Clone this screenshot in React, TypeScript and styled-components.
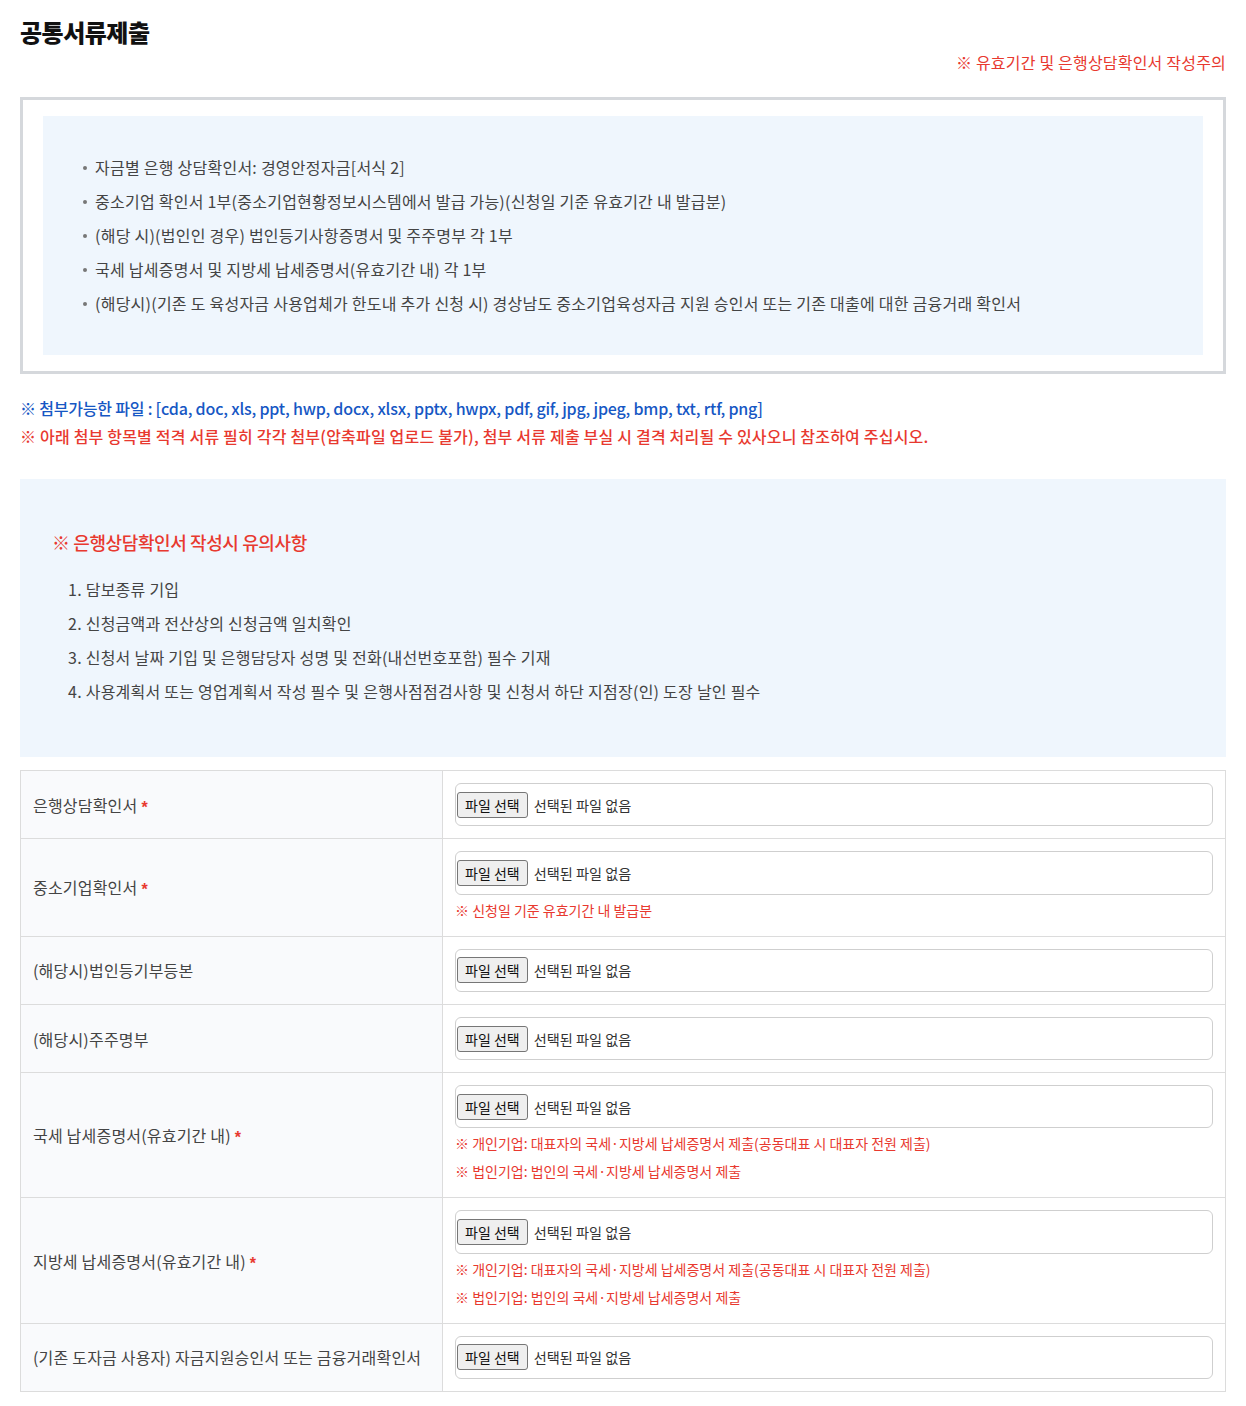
import React from "react";
import styled, { createGlobalStyle } from "styled-components";

const GlobalStyle = createGlobalStyle`
  html, body { margin: 0; padding: 0; background: #fff; }
  body {
    font-family: "Noto Sans CJK KR", "Noto Sans", sans-serif;
    color: #333;
  }
  * { box-sizing: border-box; }
`;

const Page = styled.div`
  padding: 14px 20px 14px 20px;
  width: 1246px;
`;

const Title = styled.h2`
  margin: 0;
  font-size: 24px;
  font-weight: 900;
  color: #111;
  line-height: 36px;
  letter-spacing: -0.5px;
`;

const TopNote = styled.div`
  text-align: right;
  color: #e8392f;
  font-size: 16px;
  line-height: 24px;
  letter-spacing: 0.2px;
`;

const GuideBox = styled.div`
  margin-top: 23px;
  border: 3px solid #d5d8dc;
  padding: 16px 20px;
`;

const GuideInner = styled.ul`
  margin: 0;
  list-style: none;
  background: #eff6fd;
  padding: 34px 40px 35px 40px;
`;

const GuideItem = styled.li`
  position: relative;
  font-size: 16px;
  line-height: 34px;
  color: #444;
  padding-left: 12px;
  letter-spacing: 0.25px;
  &::before {
    content: "";
    position: absolute;
    left: 0;
    top: 16px;
    width: 4px;
    height: 4px;
    border-radius: 50%;
    background: #777;
  }
`;

const Notice = styled.p<{ $tone: "blue" | "red" }>`
  margin: 0;
  font-size: 16px;
  line-height: 28px;
  font-weight: 500;
  letter-spacing: ${(p) => (p.$tone === "blue" ? "-0.2px" : "0.2px")};
  color: ${(p) => (p.$tone === "blue" ? "#1657c4" : "#e8392f")};
`;

const NoticeGroup = styled.div`
  margin-top: 20px;
`;

const CautionBox = styled.div`
  margin-top: 29px;
  background: #eff6fd;
  padding: 48px 32px 49px 32px;
`;

const CautionTitle = styled.h3`
  margin: 0;
  font-size: 18px;
  line-height: 30px;
  font-weight: 500;
  color: #e8392f;
  letter-spacing: -0.4px;
`;

const CautionList = styled.ol`
  margin: 15px 0 0 0;
  padding: 0 0 0 16px;
  list-style: none;
`;

const CautionItem = styled.li`
  font-size: 16px;
  line-height: 34px;
  color: #444;
  letter-spacing: 0.25px;
`;

const Table = styled.table`
  margin-top: 13px;
  width: 100%;
  border-collapse: collapse;
  table-layout: fixed;
  border: 1px solid #dcdcdc;
`;

const Row = styled.tr`
  border-top: 1px solid #dcdcdc;
`;

const LabelCell = styled.th`
  width: 422px;
  background: #f9fafc;
  text-align: left;
  font-weight: 400;
  font-size: 16px;
  color: #444;
  padding: 0 12px;
  border-right: 1px solid #dcdcdc;
  vertical-align: middle;
  letter-spacing: 0.2px;
`;

const Required = styled.span`
  color: #e8392f;
  margin-left: 4px;
  font-family: "Liberation Sans", Arial, sans-serif;
  font-weight: 700;
  font-size: 16px;
  vertical-align: -1px;
`;

const FieldCell = styled.td`
  padding: 12px 12px 12px 12px;
  vertical-align: top;
`;

const FileBox = styled.div`
  height: 43.3px;
  border: 1px solid #cfcfcf;
  border-radius: 6px;
  display: flex;
  align-items: center;
  padding: 0 1px;
  gap: 6px;
`;

const FileButton = styled.button`
  height: 26px;
  padding: 0 7px;
  font-family: "Noto Sans CJK KR", sans-serif;
  font-size: 14px;
  color: #111;
  background: #efefef;
  border: 1px solid #767676;
  border-radius: 3px;
  line-height: 24px;
`;

const FileStatus = styled.span`
  font-size: 14.2px;
  color: #333;
`;

const FieldNote = styled.p`
  margin: 0;
  font-size: 14px;
  line-height: 28px;
  color: #e8392f;
  &:first-of-type {
    margin-top: 1px;
  }
`;

const guideItems = [
  "자금별 은행 상담확인서: 경영안정자금[서식 2]",
  "중소기업 확인서 1부(중소기업현황정보시스템에서 발급 가능)(신청일 기준 유효기간 내 발급분)",
  "(해당 시)(법인인 경우) 법인등기사항증명서 및 주주명부 각 1부",
  "국세 납세증명서 및 지방세 납세증명서(유효기간 내) 각 1부",
  "(해당시)(기존 도 육성자금 사용업체가 한도내 추가 신청 시) 경상남도 중소기업육성자금 지원 승인서 또는 기존 대출에 대한 금융거래 확인서",
];

const cautionItems = [
  "1. 담보종류 기입",
  "2. 신청금액과 전산상의 신청금액 일치확인",
  "3. 신청서 날짜 기입 및 은행담당자 성명 및 전화(내선번호포함) 필수 기재",
  "4. 사용계획서 또는 영업계획서 작성 필수 및 은행사점점검사항 및 신청서 하단 지점장(인) 도장 날인 필수",
];

const taxNotes = [
  "※ 개인기업: 대표자의 국세·지방세 납세증명서 제출(공동대표 시 대표자 전원 제출)",
  "※ 법인기업: 법인의 국세·지방세 납세증명서 제출",
];

const rows: { label: string; required: boolean; notes: string[] }[] = [
  { label: "은행상담확인서", required: true, notes: [] },
  { label: "중소기업확인서", required: true, notes: ["※ 신청일 기준 유효기간 내 발급분"] },
  { label: "(해당시)법인등기부등본", required: false, notes: [] },
  { label: "(해당시)주주명부", required: false, notes: [] },
  { label: "국세 납세증명서(유효기간 내)", required: true, notes: taxNotes },
  { label: "지방세 납세증명서(유효기간 내)", required: true, notes: taxNotes },
  { label: "(기존 도자금 사용자) 자금지원승인서 또는 금융거래확인서", required: false, notes: [] },
];

export default function App() {
  return (
    <>
      <GlobalStyle />
      <Page>
        <Title>공통서류제출</Title>
        <TopNote>※ 유효기간 및 은행상담확인서 작성주의</TopNote>
        <GuideBox>
          <GuideInner>
            {guideItems.map((t) => (
              <GuideItem key={t}>{t}</GuideItem>
            ))}
          </GuideInner>
        </GuideBox>
        <NoticeGroup>
          <Notice $tone="blue">
            ※ 첨부가능한 파일 : [cda, doc, xls, ppt, hwp, docx, xlsx, pptx, hwpx, pdf, gif, jpg, jpeg, bmp, txt, rtf, png]
          </Notice>
          <Notice $tone="red">
            ※ 아래 첨부 항목별 적격 서류 필히 각각 첨부(압축파일 업로드 불가), 첨부 서류 제출 부실 시 결격 처리될 수 있사오니 참조하여 주십시오.
          </Notice>
        </NoticeGroup>
        <CautionBox>
          <CautionTitle>※ 은행상담확인서 작성시 유의사항</CautionTitle>
          <CautionList>
            {cautionItems.map((t) => (
              <CautionItem key={t}>{t}</CautionItem>
            ))}
          </CautionList>
        </CautionBox>
        <Table>
          <tbody>
            {rows.map((r) => (
              <Row key={r.label}>
                <LabelCell>
                  {r.label}
                  {r.required && <Required>*</Required>}
                </LabelCell>
                <FieldCell>
                  <FileBox>
                    <FileButton type="button">파일 선택</FileButton>
                    <FileStatus>선택된 파일 없음</FileStatus>
                  </FileBox>
                  {r.notes.map((n) => (
                    <FieldNote key={n}>{n}</FieldNote>
                  ))}
                </FieldCell>
              </Row>
            ))}
          </tbody>
        </Table>
      </Page>
    </>
  );
}
